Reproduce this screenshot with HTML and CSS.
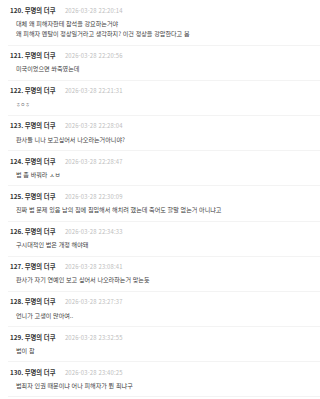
FILE: index.html
```html
<!DOCTYPE html>
<html lang="ko">
<head>
<meta charset="utf-8">
<link rel="stylesheet" href="styles.css">
</head>
<body>
<ul class="comments">
  <li class="comment">
    <div class="head"><span class="num">120.</span> <span class="name">무명의 더쿠</span><span class="date">2026-03-28 22:20:14</span></div>
    <div class="body">대체 왜 피해자한테 참석을 강요하는거야<br>왜 피해자 멘탈이 정상일거라고 생각하지? 이건 정상을 강압한다고 봄</div>
  </li>
  <li class="comment">
    <div class="head"><span class="num">121.</span> <span class="name">무명의 더쿠</span><span class="date">2026-03-28 22:20:56</span></div>
    <div class="body">미국이었으면 쏴죽였는데</div>
  </li>
  <li class="comment">
    <div class="head"><span class="num">122.</span> <span class="name">무명의 더쿠</span><span class="date">2026-03-28 22:21:31</span></div>
    <div class="body small">ㅎㅇㅎ</div>
  </li>
  <li class="comment">
    <div class="head"><span class="num">123.</span> <span class="name">무명의 더쿠</span><span class="date">2026-03-28 22:28:04</span></div>
    <div class="body">판사들 니나 보고싶어서 나오라는거아니야?</div>
  </li>
  <li class="comment">
    <div class="head"><span class="num">124.</span> <span class="name">무명의 더쿠</span><span class="date">2026-03-28 22:28:47</span></div>
    <div class="body">법 좀 바꿔라 ㅅㅂ</div>
  </li>
  <li class="comment">
    <div class="head"><span class="num">125.</span> <span class="name">무명의 더쿠</span><span class="date">2026-03-28 22:30:09</span></div>
    <div class="body">진짜 법 문제 있음 남의 집에 침입해서 해치려 했는데 죽어도 할말 없는거 아니냐고</div>
  </li>
  <li class="comment">
    <div class="head"><span class="num">126.</span> <span class="name">무명의 더쿠</span><span class="date">2026-03-28 22:34:33</span></div>
    <div class="body">구시대적인 법은 개정 해야돼</div>
  </li>
  <li class="comment">
    <div class="head"><span class="num">127.</span> <span class="name">무명의 더쿠</span><span class="date">2026-03-28 23:08:41</span></div>
    <div class="body">판사가 자기 연예인 보고 싶어서 나오라하는거 맞는듯</div>
  </li>
  <li class="comment">
    <div class="head"><span class="num">128.</span> <span class="name">무명의 더쿠</span><span class="date">2026-03-28 23:27:37</span></div>
    <div class="body">언니가 고생이 많아여..</div>
  </li>
  <li class="comment">
    <div class="head"><span class="num">129.</span> <span class="name">무명의 더쿠</span><span class="date">2026-03-28 23:32:55</span></div>
    <div class="body">법이 참</div>
  </li>
  <li class="comment">
    <div class="head"><span class="num">130.</span> <span class="name">무명의 더쿠</span><span class="date">2026-03-28 23:40:25</span></div>
    <div class="body">범죄자 인권 때문이냐 어나 피해자가 뭔 죄냐구</div>
  </li>
</ul>
</body>
</html>
```
FILE: styles.css
```css
html, body {
  margin: 0;
  padding: 0;
  background: #ffffff;
}

body {
  font-family: "Noto Sans CJK KR", "Noto Sans", sans-serif;
  color: #333333;
  overflow: hidden;
}

.comments {
  list-style: none;
  margin: 0 0 0 8px;
  padding: 0;
}

.comment {
  padding: 5.5px 0 5.1px 0;
  border-bottom: 1px solid #f3f3f3;
}

.head {
  display: flex;
  align-items: center;
  height: 10px;
  line-height: 10px;
  padding-left: 2px;
  white-space: nowrap;
}

.num, .name {
  font-size: 6.3px;
  font-weight: 700;
  color: #333333;
}

.num {
  margin-right: 1.5px;
}

.date {
  margin-left: 9.5px;
  font-size: 5.9px;
  color: #bdbdbd;
  letter-spacing: 0.15px;
}

.body {
  margin-top: 3.2px;
  padding-left: 8px;
  font-size: 6.1px;
  line-height: 10.4px;
  color: #3d3d3d;
  white-space: nowrap;
}

.body.small {
  font-size: 5px;
  color: #666666;
}
```
